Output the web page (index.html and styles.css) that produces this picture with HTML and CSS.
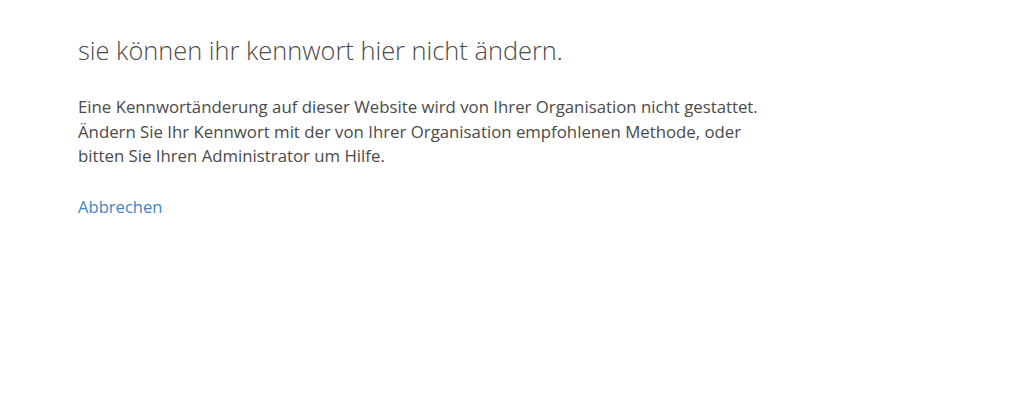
FILE: index.html
```html
<!DOCTYPE html>
<html lang="de">
<head>
  <meta charset="UTF-8" />
  <meta name="viewport" content="width=device-width, initial-scale=1.0" />
  <title>Kennwort ändern</title>
  <link rel="stylesheet" href="styles.css">
</head>
<body>
  <div class="container">
    <h1 class="title">sie können ihr kennwort hier nicht ändern.</h1>
    <p class="message">Eine Kennwortänderung auf dieser Website wird von Ihrer Organisation nicht gestattet.<br>
    Ändern Sie Ihr Kennwort mit der von Ihrer Organisation empfohlenen Methode, oder<br>
    bitten Sie Ihren Administrator um Hilfe.</p>
    <a class="cancel" href="#">Abbrechen</a>
  </div>
</body>
</html>
```

FILE: styles.css
```css
* { box-sizing: border-box; }
html, body { margin: 0; padding: 0; height: 100%; background: #fff; color: #4a4a4a; font-family: "Open Sans", "Noto Sans", Arial, sans-serif; }
.container { padding: 32px 0 0 78px; }
.title { margin: 0; font-size: 25.4px; font-weight: 300; line-height: 36px; color: #4a4a4a; }
.message { margin: 27px 0 0; font-size: 16.8px; line-height: 24.5px; color: #4a4a4a; }
.cancel { display: inline-block; margin-top: 26.5px; font-size: 16.6px; line-height: 24px; color: #3f85c2; text-decoration: none; }
```
